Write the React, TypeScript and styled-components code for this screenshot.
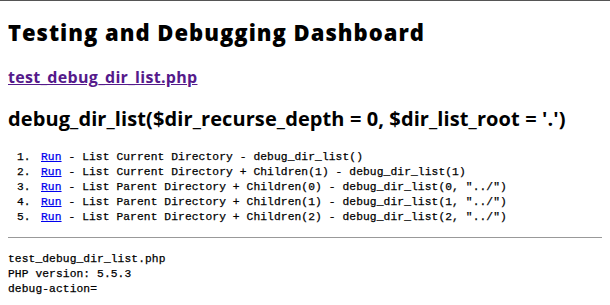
import React from "react";
import styled, { createGlobalStyle } from "styled-components";

const GlobalStyle = createGlobalStyle`
  html {
    border-top: 1px solid #555;
    background: #fff;
  }
  body {
    margin: 0 8px;
    padding-top: 8px;
    color: #000;
    font-family: "Liberation Serif", serif;
  }
`;

const Page = styled.div`
  display: flex;
  flex-direction: column;
`;

const headingFont = `"Open Sans", Lato, sans-serif`;
const monoFont = `"Liberation Mono", "DejaVu Sans Mono", monospace`;

const Title = styled.h1`
  margin: 10px 0 0;
  font-family: ${headingFont};
  font-weight: 800;
  font-size: 22px;
  line-height: 26px;
  letter-spacing: 1px;
`;

const FileLine = styled.p`
  margin: 22px 0 0;
  font-family: ${headingFont};
  font-weight: 700;
  font-size: 16px;
  line-height: 20px;
  letter-spacing: 0.3px;
`;

const Link = styled.a<{ $visited?: boolean }>`
  color: ${(p) => (p.$visited ? "#551a8b" : "#0000ee")};
  text-decoration: underline;
`;

const Signature = styled.h2`
  margin: 20px 0 0;
  font-family: ${headingFont};
  font-weight: 700;
  font-size: 20px;
  line-height: 24px;
  letter-spacing: 0.1px;
`;

const ActionList = styled.ol`
  margin: 19px 0 0;
  padding: 0 0 0 9px;
  list-style: none;
  font-family: ${monoFont};
  font-size: 11.25px;
  line-height: 15px;
  letter-spacing: 0.1px;
  -webkit-text-stroke: 0.25px currentColor;
`;

const ActionItem = styled.li`
  display: flex;
  gap: 10px;
  white-space: pre;
`;

const Num = styled.span`
  width: 14px;
`;

const Rule = styled.hr`
  margin: 12px 0 0;
  border: none;
  border-top: 1px solid #999;
  height: 0;
`;

const Output = styled.pre`
  margin: 14px 0 0;
  font-family: ${monoFont};
  font-size: 11.25px;
  line-height: 15px;
  letter-spacing: 0.1px;
  -webkit-text-stroke: 0.25px currentColor;
`;

const actions = [
  "List Current Directory - debug_dir_list()",
  "List Current Directory + Children(1) - debug_dir_list(1)",
  'List Parent Directory + Children(0) - debug_dir_list(0, "../")',
  'List Parent Directory + Children(1) - debug_dir_list(1, "../")',
  'List Parent Directory + Children(2) - debug_dir_list(2, "../")',
];

export default function App() {
  return (
    <>
      <GlobalStyle />
      <Page>
        <Title>Testing and Debugging Dashboard</Title>
        <FileLine>
          <Link $visited href="#">
            test_debug_dir_list.php
          </Link>
        </FileLine>
        <Signature>
          debug_dir_list($dir_recurse_depth = 0, $dir_list_root = '.')
        </Signature>
        <ActionList>
          {actions.map((a, i) => (
            <ActionItem key={i}>
              <Num>{i + 1}.</Num>
              <span>
                <Link href="#">Run</Link> - {a}
              </span>
            </ActionItem>
          ))}
        </ActionList>
        <Rule />
        <Output>
          {"test_debug_dir_list.php\nPHP version: 5.5.3\ndebug-action="}
        </Output>
      </Page>
    </>
  );
}
